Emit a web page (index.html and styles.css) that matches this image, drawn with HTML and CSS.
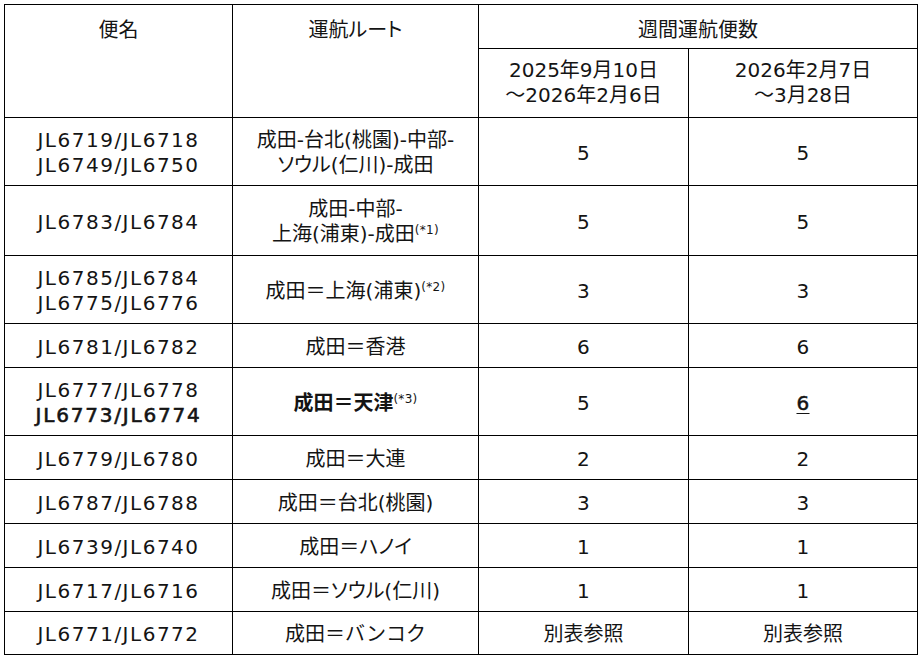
FILE: index.html
```html
<!DOCTYPE html>
<html lang="ja">
<head>
<meta charset="utf-8">
<title>運航便数</title>
<link rel="stylesheet" href="styles.css">
</head>
<body>
<table class="sched">
  <colgroup>
    <col class="c1"><col class="c2"><col class="c3"><col class="c4">
  </colgroup>
  <thead>
    <tr class="h1">
      <th rowspan="2" class="top">便名</th>
      <th rowspan="2" class="top">運航ルート</th>
      <th colspan="2" class="top">週間運航便数</th>
    </tr>
    <tr class="h2">
      <th>2025年9月10日<br>～2026年2月6日</th>
      <th>2026年2月7日<br>～3月28日</th>
    </tr>
  </thead>
  <tbody>
    <tr class="r68">
      <td class="fl">JL6719/JL6718<br>JL6749/JL6750</td>
      <td>成田-台北(桃園)-中部-<br>ソウル(仁川)-成田</td>
      <td class="n">5</td><td class="n">5</td>
    </tr>
    <tr class="r70">
      <td class="fl">JL6783/JL6784</td>
      <td>成田-中部-<br>上海(浦東)-成田<span class="sup">(*1)</span></td>
      <td class="n">5</td><td class="n">5</td>
    </tr>
    <tr class="r68">
      <td class="fl">JL6785/JL6784<br>JL6775/JL6776</td>
      <td>成田＝上海(浦東)<span class="sup">(*2)</span></td>
      <td class="n">3</td><td class="n">3</td>
    </tr>
    <tr class="r44">
      <td class="fl">JL6781/JL6782</td>
      <td>成田＝香港</td>
      <td class="n">6</td><td class="n">6</td>
    </tr>
    <tr class="r68">
      <td class="fl">JL6777/JL6778<br><strong class="b">JL6773/JL6774</strong></td>
      <td><strong class="bj">成田＝天津</strong><span class="sup">(*3)</span></td>
      <td class="n">5</td><td class="n"><span class="chg">6</span></td>
    </tr>
    <tr class="r44">
      <td class="fl">JL6779/JL6780</td>
      <td>成田＝大連</td>
      <td class="n">2</td><td class="n">2</td>
    </tr>
    <tr class="r44">
      <td class="fl">JL6787/JL6788</td>
      <td>成田＝台北(桃園)</td>
      <td class="n">3</td><td class="n">3</td>
    </tr>
    <tr class="r44">
      <td class="fl">JL6739/JL6740</td>
      <td>成田＝ハノイ</td>
      <td class="n">1</td><td class="n">1</td>
    </tr>
    <tr class="r44">
      <td class="fl">JL6717/JL6716</td>
      <td>成田＝ソウル(仁川)</td>
      <td class="n">1</td><td class="n">1</td>
    </tr>
    <tr class="r43">
      <td class="fl">JL6771/JL6772</td>
      <td class="full">成田＝バンコク</td>
      <td>別表参照</td><td>別表参照</td>
    </tr>
  </tbody>
</table>
</body>
</html>
```

FILE: styles.css
```css
html, body {
  margin: 0;
  padding: 0;
  background: #ffffff;
}

body {
  font-family: "DejaVu Sans", "Noto Sans CJK JP", sans-serif;
  font-size: 20px;
  color: #141414;
}

.sched {
  margin: 4px 0 0 4px;
  border-collapse: collapse;
  table-layout: fixed;
  width: 914px;
  font-feature-settings: "palt";
}

.c1 { width: 228px; }
.c2 { width: 246px; }
.c3 { width: 210px; }
.c4 { width: 229px; }

.sched th,
.sched td {
  border: 1px solid #000;
  padding: 0;
  text-align: center;
  vertical-align: middle;
  line-height: 25px;
  font-weight: normal;
  white-space: nowrap;
}

.sched td {
  padding-top: 3px;
}

.sched th.top {
  vertical-align: top;
  padding-top: 13px;
}

.h1 { height: 44px; }
.h2 { height: 69px; }
.r68 { height: 68px; }
.r70 { height: 70px; }
.r44 { height: 44px; }
.r43 { height: 43px; }

.fl {
  letter-spacing: 1.5px;
}

.b {
  font-weight: normal;
  letter-spacing: 1.8px;
  -webkit-text-stroke: 0.6px currentColor;
}

.bj {
  font-weight: bold;
}

.n {
  letter-spacing: 0.3px;
}

.chg {
  -webkit-text-stroke: 0.5px currentColor;
  text-decoration: underline;
  text-decoration-thickness: 1px;
  text-underline-offset: 3px;
}

.sup {
  font-size: 12px;
  vertical-align: 7px;
  line-height: 0;
  letter-spacing: 0.3px;
}

.full {
  font-feature-settings: normal;
}
```
